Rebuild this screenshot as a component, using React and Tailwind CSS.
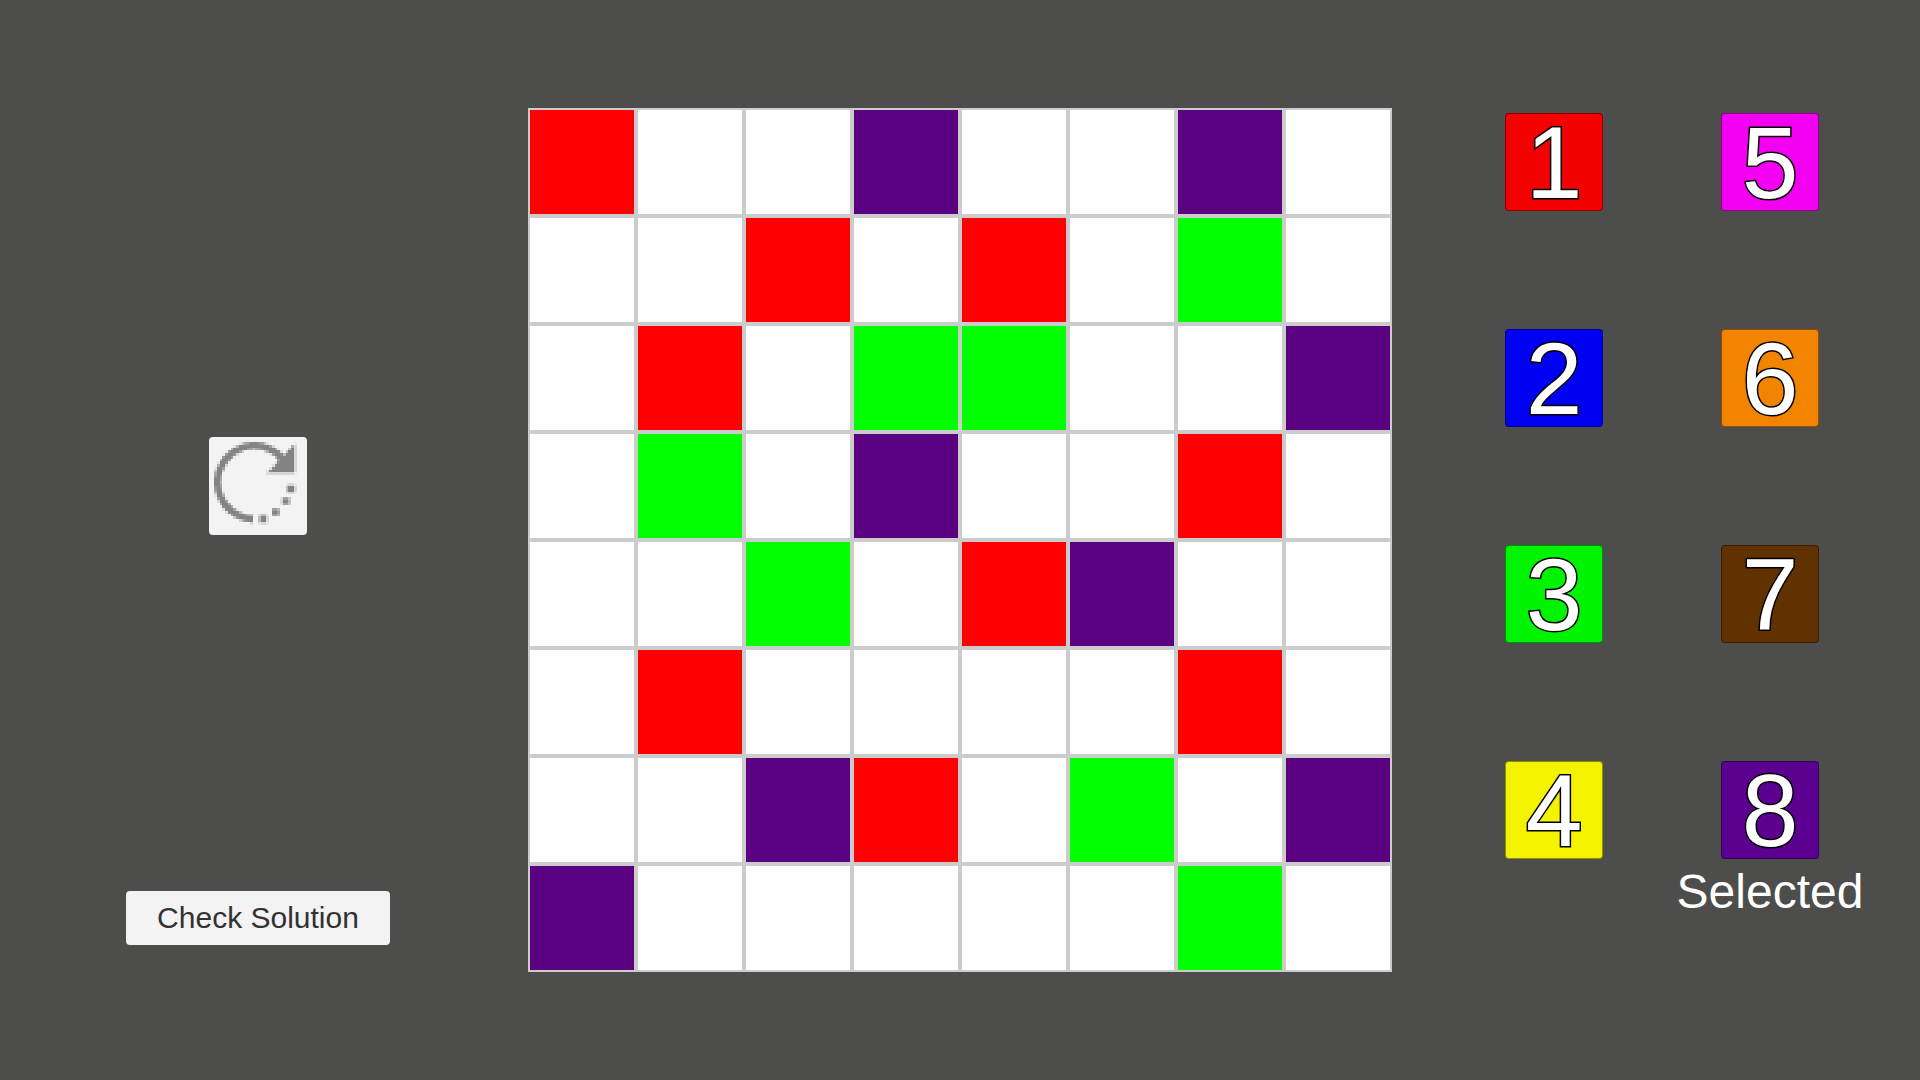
const FILLS = {
  R: "bg-[#ff0000]",
  P: "bg-[#5a0080]",
  G: "bg-[#00ff00]",
  ".": "bg-white",
};

const COLOR_NAMES = { R: "red", P: "purple", G: "green", ".": "empty" };

const BOARD = [
  "R..P..P.",
  "..R.R.G.",
  ".R.GG..P",
  ".G.P..R.",
  "..G.RP..",
  ".R....R.",
  "..PR.G.P",
  "P.....G.",
];

const PALETTE = [
  { n: 1, fill: "bg-[#f30000]" },
  { n: 2, fill: "bg-[#0000f3]" },
  { n: 3, fill: "bg-[#00f300]" },
  { n: 4, fill: "bg-[#f3f300]" },
  { n: 5, fill: "bg-[#f300f3]" },
  { n: 6, fill: "bg-[#f38400]" },
  { n: 7, fill: "bg-[#613200]" },
  { n: 8, fill: "bg-[#5c0092]", selected: true },
];

// Low-resolution icon: each cell of a 32x32 grid is shaded by how much of it the shape covers.
const N = 32;
const DOTS = [[27.8, 17], [26.1, 21.5], [22.4, 25.5], [17.8, 27.8]];

function inShape(x, y) {
  // Arrow head: right triangle with its long side facing up and left.
  if (x <= 29.2 && y <= 11.3 && x + y * 0.95 >= 29.9) return true;
  if (DOTS.some(([cx, cy]) => Math.abs(x - cx) < 1.35 && Math.abs(y - cy) < 1.35)) return true;
  const dx = x - 14.6;
  const dy = y - 14.6;
  const r = Math.hypot(dx, dy);
  if (r < 12 || r > 14.6) return false;
  return dx < -0.6 || (dy < 0 && x < 25.5);
}

function coverage(cx, cy) {
  let hits = 0;
  for (let i = 0; i < 4; i++)
    for (let j = 0; j < 4; j++)
      if (inShape(cx + (i + 0.5) / 4, cy + (j + 0.5) / 4)) hits++;
  return hits / 16;
}

function ResetIcon() {
  const cells = [];
  for (let y = 0; y < N; y++)
    for (let x = 0; x < N; x++) {
      const c = coverage(x, y);
      if (c > 0) cells.push(<rect key={`${x}-${y}`} x={x} y={y} width="1" height="1" fillOpacity={c} />);
    }
  return (
    <svg viewBox="0 0 32 32" className="size-[88px] fill-[#838383]" shapeRendering="crispEdges" aria-hidden="true">
      {cells}
    </svg>
  );
}

export default function App() {
  return (
    <main className="flex min-h-screen items-center bg-[#4d4d4b] font-['Liberation_Sans',Arial,sans-serif]">
      <section className="flex flex-1 flex-col items-center justify-end gap-[356px] self-stretch pr-3 pb-[135px]">
        <button aria-label="Reset" className="flex size-[98px] items-center justify-center rounded-sm bg-[#f3f3f3]">
          <ResetIcon />
        </button>
        <button className="h-[54px] rounded-sm bg-[#f3f3f3] px-[31px] text-[30px] leading-none text-[#323232]">
          Check Solution
        </button>
      </section>

      <section aria-label="Board" className="grid grid-cols-8 gap-1 bg-[#cccccc] p-0.5">
        {BOARD.flatMap((row, r) =>
          [...row].map((c, i) => (
            <button
              key={`${r}-${i}`}
              aria-label={`Row ${r + 1}, column ${i + 1}, ${COLOR_NAMES[c]}`}
              className={`size-[104px] ${FILLS[c]}`}
            />
          ))
        )}
      </section>

      <section aria-label="Colors" className="flex flex-1 justify-center pb-27 pl-3">
        <div className="grid grid-flow-col grid-cols-[216px_216px] grid-rows-[repeat(4,216px)]">
          {PALETTE.map(({ n, fill, selected }) => (
            <div key={n} className="relative flex items-center justify-center">
              <button
                aria-pressed={!!selected}
                className={`flex size-[98px] items-center justify-center rounded-sm border border-black/40 pt-0.5 text-[102px] leading-none text-white [-webkit-text-stroke:3px_black] [paint-order:stroke_fill] [stroke-linejoin:round] ${fill}`}
              >
                {n}
              </button>
              {selected && (
                <span className="absolute inset-x-0 top-[166px] text-center text-5xl leading-none text-white">Selected</span>
              )}
            </div>
          ))}
        </div>
      </section>
    </main>
  );
}
